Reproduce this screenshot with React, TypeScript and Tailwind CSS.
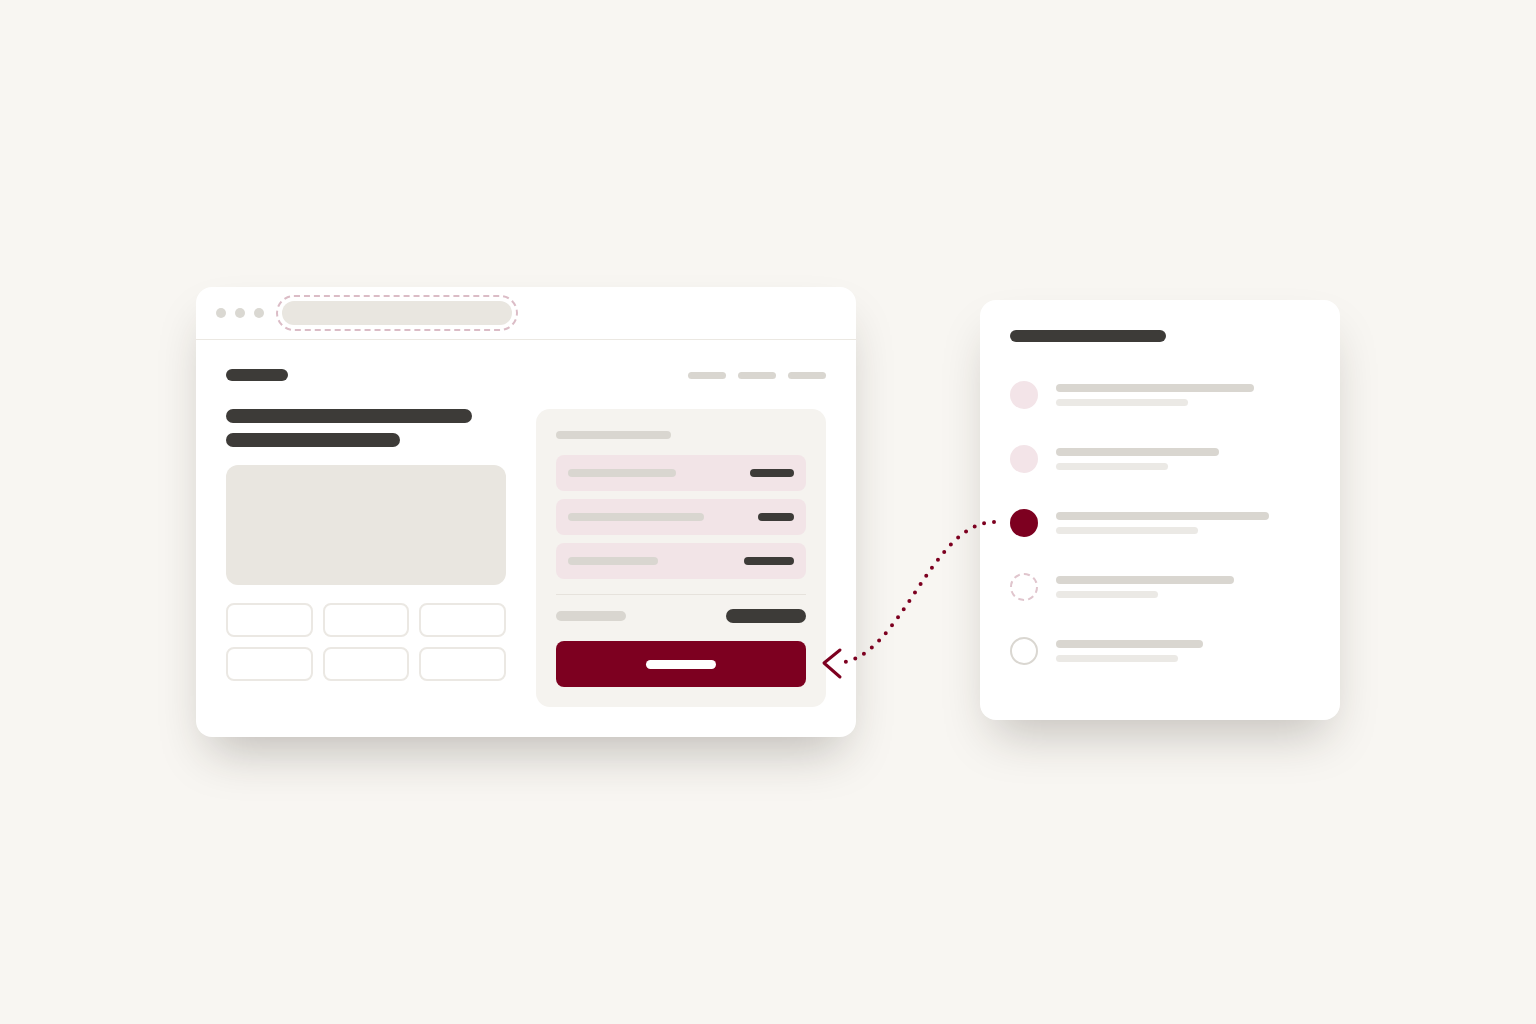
import React from 'react';

const bar = 'rounded-full';

function BrowserWindow() {
    const rows = [
        { left: 108, right: 44 },
        { left: 136, right: 36 },
        { left: 90, right: 50 },
    ];

    return (
        <div className="w-[660px] rounded-[16px] bg-white shadow-[0_26px_50px_-14px_rgba(40,32,24,0.28)]">
            {/* Title bar */}
            <div className="flex h-[53px] items-center border-b border-[#ebe8e2] pl-[20px]">
                <div className="flex gap-[9px]">
                    <span className="h-[10px] w-[10px] rounded-full bg-[#dad8d2]" />
                    <span className="h-[10px] w-[10px] rounded-full bg-[#dad8d2]" />
                    <span className="h-[10px] w-[10px] rounded-full bg-[#dad8d2]" />
                </div>
                <div className="ml-[12px] rounded-full border-2 border-dashed border-[#dbbcc6] p-[4px]">
                    <div className="h-[24px] w-[230px] rounded-full bg-[#e9e6e0]" />
                </div>
            </div>

            {/* Page */}
            <div className="px-[30px] pb-[30px] pt-[29px]">
                <div className="flex items-center justify-between">
                    <span className={`h-[12px] w-[62px] bg-[#3d3b38] ${bar}`} />
                    <div className="flex gap-[12px]">
                        <span className={`h-[7px] w-[38px] bg-[#d9d6d0] ${bar}`} />
                        <span className={`h-[7px] w-[38px] bg-[#d9d6d0] ${bar}`} />
                        <span className={`h-[7px] w-[38px] bg-[#d9d6d0] ${bar}`} />
                    </div>
                </div>

                <div className="mt-[28px] flex gap-[30px]">
                    {/* Left column */}
                    <div className="w-[280px]">
                        <div className={`h-[14px] w-[246px] bg-[#3d3b38] ${bar}`} />
                        <div className={`mt-[10px] h-[14px] w-[174px] bg-[#3d3b38] ${bar}`} />
                        <div className="mt-[18px] h-[120px] rounded-[12px] bg-[#e9e6e0]" />
                        <div className="mt-[18px] grid grid-cols-3 gap-x-[10px] gap-y-[10px]">
                            {Array.from({ length: 6 }).map((_, i) => (
                                <div key={i} className="h-[34px] rounded-[8px] border-2 border-[#ebe8e3]" />
                            ))}
                        </div>
                    </div>

                    {/* Checkout panel */}
                    <div className="w-[290px] rounded-[14px] bg-[#f5f3ef] px-[20px] pb-[20px] pt-[22px]">
                        <div className={`h-[8px] w-[115px] bg-[#d9d6d0] ${bar}`} />
                        <div className="mt-[16px] flex flex-col gap-[8px]">
                            {rows.map((r, i) => (
                                <div
                                    key={i}
                                    className="flex h-[36px] items-center justify-between rounded-[8px] bg-[#f2e4e7] px-[12px]"
                                >
                                    <span className={`h-[8px] bg-[#d9d6d0] ${bar}`} style={{ width: r.left }} />
                                    <span className={`h-[8px] bg-[#3d3b38] ${bar}`} style={{ width: r.right }} />
                                </div>
                            ))}
                        </div>
                        <div className="mt-[15px] h-px bg-[#e6e2dc]" />
                        <div className="mt-[14px] flex items-center justify-between">
                            <span className={`h-[10px] w-[70px] bg-[#d9d6d0] ${bar}`} />
                            <span className={`h-[14px] w-[80px] bg-[#3d3b38] ${bar}`} />
                        </div>
                        <div className="mt-[18px] flex h-[46px] items-center justify-center rounded-[8px] bg-[#7d0020]">
                            <span className={`h-[9px] w-[70px] bg-white ${bar}`} />
                        </div>
                    </div>
                </div>
            </div>
        </div>
    );
}

type Step = { kind: 'soft' | 'active' | 'dashed' | 'empty'; top: number; sub: number };

function StepsCard() {
    const steps: Step[] = [
        { kind: 'soft', top: 198, sub: 132 },
        { kind: 'soft', top: 163, sub: 112 },
        { kind: 'active', top: 213, sub: 142 },
        { kind: 'dashed', top: 178, sub: 102 },
        { kind: 'empty', top: 147, sub: 122 },
    ];

    const dot = (kind: Step['kind']) => {
        switch (kind) {
            case 'soft':
                return 'bg-[#f3e4e8]';
            case 'active':
                return 'bg-[#7d0020]';
            case 'dashed':
                return 'border-2 border-dashed border-[#e0c5cd]';
            default:
                return 'border-2 border-[#dad7d1]';
        }
    };

    return (
        <div className="mb-[4px] w-[360px] rounded-[16px] bg-white px-[30px] pb-[55px] pt-[30px] shadow-[0_26px_50px_-14px_rgba(40,32,24,0.26)]">
            <div className={`h-[12px] w-[156px] bg-[#3d3b38] ${bar}`} />
            <div className="mt-[39px] flex flex-col gap-[36px]">
                {steps.map((s, i) => (
                    <div key={i} className="flex items-start gap-[18px]">
                        <span className={`h-[28px] w-[28px] shrink-0 rounded-full ${dot(s.kind)}`} />
                        <div className="flex flex-col gap-[7px] pt-[3px]">
                            <span className={`h-[8px] bg-[#d9d6d0] ${bar}`} style={{ width: s.top }} />
                            <span className={`h-[7px] bg-[#ebe9e5] ${bar}`} style={{ width: s.sub }} />
                        </div>
                    </div>
                ))}
            </div>
        </div>
    );
}

export default function App() {
    return (
        <div className="relative flex h-[1024px] w-full items-center justify-center gap-[124px] bg-[#f8f6f2]">
            <BrowserWindow />
            <StepsCard />

            {/* Dotted connector */}
            <svg className="pointer-events-none absolute left-0 top-0" width="1536" height="1024" viewBox="0 0 1536 1024">
                <path
                    d="M994 522 C930 522, 900 663, 836 663"
                    fill="none"
                    stroke="#7d0020"
                    strokeWidth="4"
                    strokeLinecap="round"
                    strokeDasharray="0 10"
                />
                <polyline
                    points="840,650 824,663 840,677"
                    fill="none"
                    stroke="#7d0020"
                    strokeWidth="3"
                    strokeLinecap="round"
                    strokeLinejoin="round"
                />
            </svg>
        </div>
    );
}
